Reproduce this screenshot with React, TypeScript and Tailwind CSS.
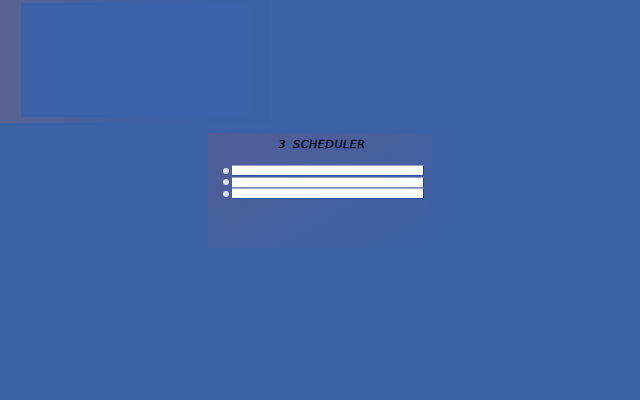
import React from "react";

export default function App() {
  const rows = [0, 1, 2];
  return (
    <div className="w-[640px] h-[400px] bg-[#3b62a7] overflow-hidden flex flex-col">
      <div className="w-[270px] h-[123px] bg-gradient-to-r from-[#5b6291] via-[#3c61a6] to-[#3a60a6] pt-[3px] pl-[21px]">
        <div className="w-[228px] h-[114px] bg-[#3b62a8]"></div>
      </div>
      <div className="mt-[10px] self-center w-[224px] h-[115px] bg-gradient-to-br from-[#525c95] via-[#46609f] to-[#3b62a7] flex flex-col items-center">
        <div
          className="mt-[5px] pl-[4px] h-[14px] text-[11px] leading-[14px] italic tracking-[0.6px] [word-spacing:3px] text-[#08080f] [-webkit-text-stroke:0.35px_#08080f]"
          style={{ fontFamily: '"DejaVu Sans", sans-serif' }}
        >
          3 SCHEDULER
        </div>
        <div className="mt-[13px] pl-[7px] flex flex-col">
          {rows.map((i) => (
            <div key={i} className="flex items-center h-[11.5px]">
              <div className="w-[6px] h-[6px] rounded-full bg-[#dde0ea] mr-[3px]"></div>
              <div
                className={
                  "w-[192px] h-[11px] bg-white border-r border-r-[#1c3f8c] border-t border-t-[#9aa4c4] " +
                  (i === 1 ? "border-b border-b-[#7f89ad]" : "border-b border-b-[#2a52a3]")
                }
              ></div>
            </div>
          ))}
        </div>
      </div>
    </div>
  );
}
